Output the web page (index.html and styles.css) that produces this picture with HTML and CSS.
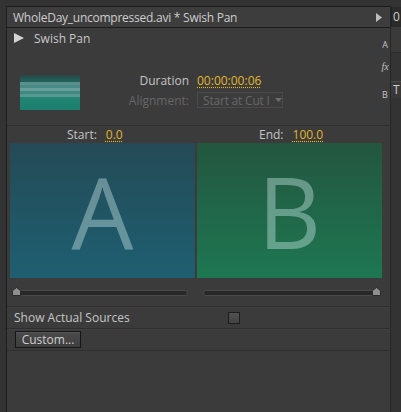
FILE: index.html
```html
<!DOCTYPE html>
<html>
<head>
<meta charset="utf-8">
<link rel="stylesheet" href="styles.css">
</head>
<body>
<div class="window">
  <div class="panel">
    <div class="titlebar">
      <span class="title">WholeDay_uncompressed.avi * Swish Pan</span>
      <svg class="title-arrow" width="6" height="9" viewBox="0 0 6 9"><polygon points="0,0 6,4.5 0,9" fill="#bdbdbd"/></svg>
    </div>
    <div class="top">
      <div class="top-main">
        <div class="fxrow">
          <svg class="play" width="10" height="10" viewBox="0 0 10 10"><polygon points="0,0 10,5 0,10" fill="#d4d4d4"/></svg>
          <span class="fxname">Swish Pan</span>
        </div>
        <div class="fxbody">
          <div class="thumb"></div>
          <div class="props">
            <span class="plabel">Duration</span>
            <span class="pvalue">00:00:00:06</span>
            <span class="plabel disabled">Alignment:</span>
            <div class="dropdown">
              <span class="dd-text">Start at Cut I</span>
              <svg class="dd-arrow" width="7" height="4" viewBox="0 0 7 4"><polygon points="0,0 7,0 3.5,4" fill="#6c6c6c"/></svg>
            </div>
          </div>
        </div>
      </div>
      <div class="letters">
        <span class="ltr ltr-a">A</span>
        <span class="ltr ltr-fx">fx</span>
        <span class="ltr ltr-b">B</span>
      </div>
    </div>
    <div class="startend">
      <div class="se-cell se-start"><span class="se-label">Start:</span><span class="pvalue">0.0</span></div>
      <div class="se-cell se-end"><span class="se-label">End:</span><span class="pvalue">100.0</span></div>
    </div>
    <div class="preview">
      <div class="pbox pbox-a"><span class="big">A</span></div>
      <div class="pbox pbox-b"><span class="big">B</span></div>
    </div>
    <div class="sliders">
      <div class="track track-left">
        <svg class="knob knob-left" width="9" height="9" viewBox="0 0 9 9"><polygon points="4.5,0.5 8.5,3.5 8.5,8.5 0.5,8.5 0.5,3.5" fill="#8e8e8e" stroke="#2a2a2a" stroke-width="1"/></svg>
      </div>
      <div class="track track-right">
        <svg class="knob knob-right" width="9" height="9" viewBox="0 0 9 9"><polygon points="4.5,0.5 8.5,3.5 8.5,8.5 0.5,8.5 0.5,3.5" fill="#8e8e8e" stroke="#2a2a2a" stroke-width="1"/></svg>
      </div>
    </div>
    <div class="row sources">
      <span class="src-label">Show Actual Sources</span>
      <span class="checkbox"></span>
    </div>
    <div class="row customrow">
      <button class="btn">Custom...</button>
    </div>
    <div class="rest"></div>
  </div>
  <div class="side">
    <div class="side-top">0</div>
    <div class="side-a"></div>
    <div class="side-b"></div>
    <div class="side-t">T</div>
    <div class="side-rest"></div>
  </div>
</div>
</body>
</html>
```
FILE: styles.css
```css
html, body {
  margin: 0;
  padding: 0;
}
body {
  width: 401px;
  height: 412px;
  overflow: hidden;
  background: #333333;
  font-family: "Open Sans", "Noto Sans", sans-serif;
  font-size: 12px;
  color: #c6c6c6;
}
.window {
  display: flex;
  height: 412px;
  padding-top: 6px;
  padding-left: 6px;
  box-sizing: border-box;
}
.panel {
  width: 383px;
  border-left: 1px solid #1e1e1e;
  border-right: 1px solid #262626;
  background: #3b3b3b;
  display: flex;
  flex-direction: column;
}
.titlebar {
  height: 20px;
  border-top: 1px solid #1c1c1c;
  border-bottom: 1px solid #1c1c1c;
  background: #3d3d3d;
  display: flex;
  align-items: center;
  justify-content: space-between;
  padding: 0 8px 0 6px;
}
.title {
  color: #cdcdcd;
  white-space: nowrap;
  letter-spacing: -0.25px;
}
.title-arrow {
  display: block;
}
.top {
  display: flex;
  height: 97px;
  border-bottom: 1px solid #2f2f2f;
}
.top-main {
  flex: 1;
}
.fxrow {
  height: 18px;
  margin-top: 1px;
  display: flex;
  align-items: center;
  padding-left: 7px;
}
.play {
  display: block;
}
.fxname {
  margin-left: 10px;
  color: #c8c8c8;
}
.fxbody {
  display: flex;
  align-items: flex-start;
  padding-top: 25px;
  padding-left: 13px;
}
.thumb {
  width: 60px;
  height: 35px;
  margin-top: 3px;
  background: linear-gradient(to bottom,
    #2a4544 0, #1f5a55 12%, #236058 20%,
    #5a8f8b 20%, #5a8f8b 28%,
    #468a84 28%, #468a84 37%,
    #6a9e9a 37%, #6a9e9a 47%,
    #3e8980 47%, #3e8980 55%,
    #579890 55%, #579890 63%,
    #228574 63%, #1d7f6e 100%);
}
.props {
  margin-left: 40px;
  display: grid;
  grid-template-columns: 69px auto;
  column-gap: 8px;
  row-gap: 4px;
  grid-auto-rows: 16px;
  align-items: center;
}
.plabel {
  text-align: right;
  color: #c4c4c4;
}
.plabel.disabled {
  color: #666666;
}
.pvalue {
  color: #e2b62c;
  text-decoration: underline dotted #e2b62c;
  text-underline-offset: 2px;
}
.dropdown {
  width: 86px;
  height: 16px;
  box-sizing: border-box;
  border: 1px solid #4a4a4a;
  background: #3c3c3c;
  display: flex;
  align-items: center;
  padding-left: 5px;
}
.dd-text {
  color: #676767;
  white-space: nowrap;
  letter-spacing: -0.2px;
}
.dd-arrow {
  display: block;
  margin-left: 5px;
}
.letters {
  width: 10px;
  display: flex;
  flex-direction: column;
  align-items: center;
  font-size: 9px;
  color: #c2c2c2;
}
.ltr {
  display: block;
  line-height: 10px;
}
.ltr-a {
  margin-top: 12px;
}
.ltr-fx {
  margin-top: 12px;
  font-style: italic;
  font-family: "Liberation Serif", serif;
  font-size: 10px;
}
.ltr-b {
  margin-top: 18px;
}
.startend {
  display: flex;
  height: 17px;
  align-items: center;
}
.se-cell {
  display: flex;
  gap: 9px;
}
.se-start {
  width: 187px;
  padding-left: 60px;
  box-sizing: border-box;
}
.se-end {
  padding-left: 65px;
}
.se-label {
  color: #c4c4c4;
}
.preview {
  display: flex;
  gap: 2px;
  padding-left: 3px;
}
.pbox {
  width: 185px;
  height: 135px;
  display: flex;
  align-items: center;
  justify-content: center;
}
.pbox-a {
  background: linear-gradient(to bottom, #244a56, #1e5f71);
}
.pbox-b {
  background: linear-gradient(to bottom, #23563f, #1e7752);
}
.big {
  font-size: 98px;
  line-height: 1;
  color: rgba(200, 230, 230, 0.42);
}
.sliders {
  height: 28px;
  box-sizing: border-box;
  padding-top: 2px;
  display: flex;
  align-items: center;
}
.track {
  position: relative;
  height: 4px;
  border: 1px solid #4a4a4a;
  border-radius: 3px;
  background: #272727;
}
.track-left {
  margin-left: 5px;
  width: 174px;
}
.track-right {
  margin-left: 15px;
  width: 173px;
}
.knob {
  position: absolute;
  top: -4px;
  display: block;
}
.knob-left {
  left: -1px;
}
.knob-right {
  right: -4px;
}
.row {
  border-top: 1px solid #2e2e2e;
  box-shadow: inset 0 1px 0 #404040;
  display: flex;
  align-items: center;
}
.sources {
  height: 21px;
  padding-left: 7px;
}
.src-label {
  width: 214px;
  color: #c6c6c6;
}
.checkbox {
  width: 12px;
  height: 12px;
  box-sizing: border-box;
  border: 1px solid #1d1d1d;
  background: linear-gradient(to bottom, #505050, #444444);
}
.customrow {
  height: 21px;
  padding-left: 8px;
}
.btn {
  width: 66px;
  height: 17px;
  padding: 0;
  border: 1px solid #161616;
  background: linear-gradient(to bottom, #4a4a4a, #3e3e3e);
  box-shadow: inset 0 1px 0 #555555;
  color: #cfcfcf;
  font-family: "Open Sans", "Noto Sans", sans-serif;
  font-size: 12px;
  line-height: 14px;
}
.rest {
  flex: 1;
  border-top: 1px solid #2e2e2e;
  background: #3b3b3b;
}
.side {
  flex: 1;
  display: flex;
  flex-direction: column;
  background: #323232;
}
.side-top {
  height: 20px;
  margin-top: 1px;
  background: #2b2b2b;
  border-left: 1px solid #222;
  padding-left: 1px;
  line-height: 20px;
  color: #cccccc;
  overflow: hidden;
}
.side-a {
  height: 25px;
  background: #3a3a3a;
}
.side-b {
  height: 28px;
  background: #343434;
  border-top: 1px solid #2c2c2c;
}
.side-t {
  height: 16px;
  border-top: 1px solid #4a4a4a;
  background: #393939;
  padding-left: 2px;
  line-height: 16px;
  color: #cccccc;
  overflow: hidden;
}
.side-rest {
  flex: 1;
  background: #333333;
}
```
